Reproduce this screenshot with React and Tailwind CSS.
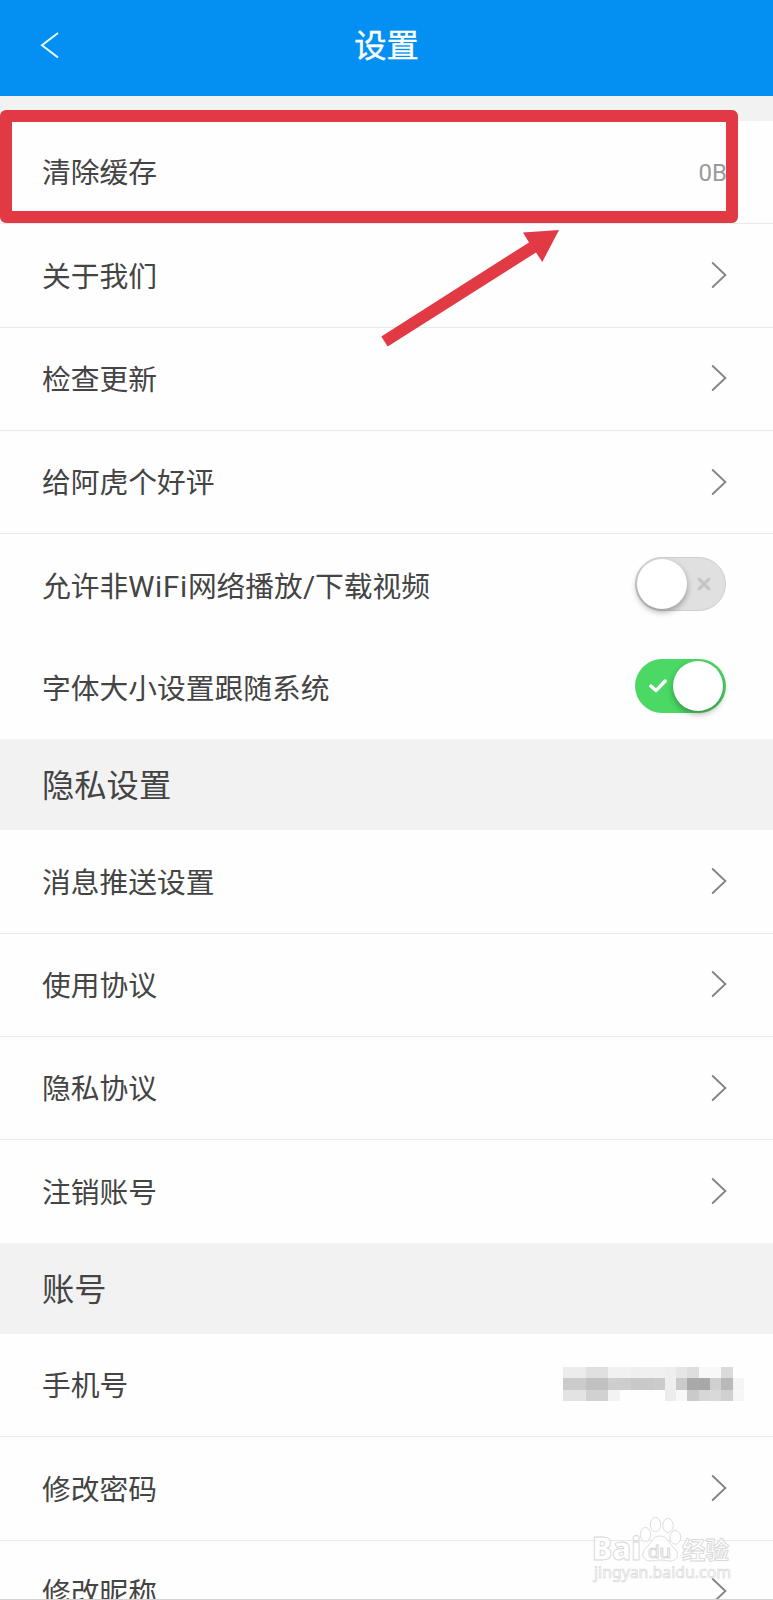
import React, { useState } from 'react';

const Chevron = () => (
    <svg className="w-[16px] h-[28px] shrink-0 -mt-px" viewBox="0 0 16 28" fill="none">
        <path d="M1.7 2 L14.4 14 L1.7 26" stroke="#858585" strokeWidth="1.9" strokeLinecap="round" />
    </svg>
);

const Row = ({ label, children, last }) => (
    <div
        className={
            last
                ? 'flex h-[102.3px] shrink-0 items-center justify-between pl-[42px] pr-[46px]'
                : 'flex h-[103.35px] shrink-0 items-center justify-between border-b border-[#e9e9e9] pl-[42px] pr-[46px]'
        }
    >
        <span className="pb-[1.5px] text-[28.75px] leading-[42px] whitespace-nowrap">{label}</span>
        {children || <Chevron />}
    </div>
);

const Section = ({ title }) => (
    <div className="flex h-[91.3px] shrink-0 items-center bg-[#f2f2f2] pl-[42px] pb-[3px] text-[32.3px] leading-[48px]">
        {title}
    </div>
);

const Toggle = ({ initial }) => {
    const [on, setOn] = useState(initial);

    return (
        <button
            onClick={() => setOn(!on)}
            className={
                on
                    ? 'mr-px -mt-[4px] flex h-[54px] w-[91px] items-center justify-between rounded-full bg-[#4bd865] pl-[13px] pr-[3px]'
                    : 'mr-px -mt-[4px] flex h-[54px] w-[91px] flex-row-reverse items-center justify-between rounded-full border border-[#cfcfcf] bg-[#e0e0e0] pl-[1px] pr-[14px]'
            }
        >
            {on ? (
                <svg className="w-[20px] h-[16px]" viewBox="0 0 20 16" fill="none">
                    <path d="M2.8 8 L8 12.6 L17.2 3" stroke="#fff" strokeWidth="3.4" strokeLinecap="round" strokeLinejoin="round" />
                </svg>
            ) : (
                <svg className="w-[14px] h-[14px]" viewBox="0 0 14 14" fill="none">
                    <path d="M2.2 2.2 L11.8 11.8 M11.8 2.2 L2.2 11.8" stroke="#c6c6c6" strokeWidth="3.2" strokeLinecap="round" />
                </svg>
            )}
            <span className="h-[50px] w-[50px] rounded-full bg-white shadow-[0_3px_6px_0_rgba(0,0,0,0.33)]" />
        </button>
    );
};

// hidden phone number, one shade per mosaic block
const mosaic = [
    ['#ececec', '#ececec', '#e0e0e0', '#e0e0e0', '#f1f1f1', '#f1f1f1', '#efefef', '#f0f0f0', '#f0f0f0', '#eeeeee', '#e6e6e6', '#dedede', '#f8f8f8', '#f8f8f8', '#dadada', '#fefefe'],
    ['#cbcbcb', '#cbcbcb', '#c1c1c1', '#c1c1c1', '#cecece', '#cdcdcd', '#c8c8c8', '#c9c9c9', '#cbcbcb', '#eeeeee', '#cacaca', '#a9a9a9', '#a8a8a8', '#d0d0d0', '#b9b9b9', '#f4f4f4'],
    ['#e3e3e3', '#e3e3e3', '#d1d1d1', '#d1d1d1', '#f3f3f3', '#fefefe', '#fefefe', '#fefefe', '#fefefe', '#ececec', '#f8f8f8', '#cacaca', '#d7d7d7', '#d9d9d9', '#d0d0d0', '#f6f6f6'],
];

const MaskedPhone = () => (
    <div className="-mr-[17px] -mt-[2px] grid h-[34px] w-[181px] grid-cols-16 grid-rows-3">
        {mosaic.flat().map((color, i) => (
            <span key={i} style={{ backgroundColor: color }} />
        ))}
    </div>
);

const Watermark = () => (
    <svg className="absolute left-[586px] top-[1510px] h-[80px] w-[156px]" viewBox="0 0 156 80" fill="#fff" fillOpacity="0.8" stroke="#d8d8d8" strokeWidth="0.9">
        <text x="6" y="50" fontFamily="Open Sans, sans-serif" fontWeight="800" fontSize="32" textLength="49" lengthAdjust="spacingAndGlyphs">Bai</text>
        <ellipse cx="59.5" cy="24.5" rx="5.2" ry="7" />
        <ellipse cx="69.5" cy="14.5" rx="5.2" ry="7" />
        <ellipse cx="82" cy="15.5" rx="5.2" ry="7" />
        <ellipse cx="89.3" cy="27.3" rx="5.4" ry="6.8" />
        <path d="M74 26 C66 26 66 33 60 38 C54 43 57 51 64 51 C69 51 70 50 74 50 C79 50 80 51 84 51 C92 51 94 43 88 38 C82 33 82 26 74 26 Z" />
        <text x="62" y="47.5" fontFamily="Liberation Sans, sans-serif" fontSize="18" textLength="23" lengthAdjust="spacingAndGlyphs">du</text>
        <text x="96" y="49" fontFamily="Noto Sans CJK SC, sans-serif" fontWeight="bold" fontSize="24" textLength="47" lengthAdjust="spacingAndGlyphs">经验</text>
        <text x="8" y="68" fontFamily="Noto Sans, sans-serif" fontSize="17" strokeWidth="0.7" textLength="137" lengthAdjust="spacingAndGlyphs">jingyan.baidu.com</text>
    </svg>
);

const App = () => {
    return (
        <div className="relative flex h-[1600px] w-[773px] flex-col overflow-hidden bg-[#fefefe] font-['Noto_Sans_CJK_SC',sans-serif] text-[#444]">
            <header className="grid h-[96px] shrink-0 grid-cols-3 items-center bg-[#048ff2] pb-[5px] text-white">
                <svg className="ml-[39px] -mt-px h-[28px] w-[22px]" viewBox="0 0 22 28" fill="none">
                    <path d="M19 2 L3 14.3 L19 26.5" stroke="#e6ffff" strokeWidth="2" />
                </svg>
                <h1 className="pb-[5px] text-center text-[32.3px] leading-[48px] [-webkit-text-stroke:0.4px_white]">设置</h1>
            </header>
            <div className="h-[25px] shrink-0 bg-[#f2f2f2]" />

            <Row label="清除缓存">
                <span className="pt-[2px] font-['Roboto',sans-serif] text-[24px] text-[#9a9a9a]">0B</span>
            </Row>
            <Row label="关于我们" />
            <Row label="检查更新" />
            <Row label="给阿虎个好评" />
            <Row
                last
                label={
                    <>
                        允许非<span className="font-['Roboto',sans-serif] text-[29.5px] leading-none tracking-[0.7px]">WiFi</span>
                        网络播放<span className="font-['Roboto',sans-serif] text-[29.5px] leading-none">/</span>下载视频
                    </>
                }
            >
                <Toggle initial={false} />
            </Row>
            <Row label="字体大小设置跟随系统" last>
                <Toggle initial />
            </Row>

            <Section title="隐私设置" />
            <Row label="消息推送设置" />
            <Row label="使用协议" />
            <Row label="隐私协议" />
            <Row label="注销账号" last />

            <Section title="账号" />
            <Row label="手机号">
                <MaskedPhone />
            </Row>
            <Row label="修改密码" />
            <Row label="修改昵称" />

            {/* highlight box and arrow over the list */}
            <div className="absolute left-0 top-[110px] h-[113px] w-[738px] rounded-[6px] bg-transparent border-[12px] border-[#e13a45]" />
            <svg className="absolute left-[376px] top-[226px] h-[124px] w-[190px]" viewBox="0 0 190 124">
                <path d="M5.3 110.5 L153 16.5 L147 6.5 L183 4 L166.3 36 L160 26.5 L11.7 120.5 Z" fill="#e13a45" />
            </svg>

            <Watermark />
            <div className="absolute bottom-0 left-0 h-px w-full bg-[#d2d2d2]" />
        </div>
    );
};

export default App;
